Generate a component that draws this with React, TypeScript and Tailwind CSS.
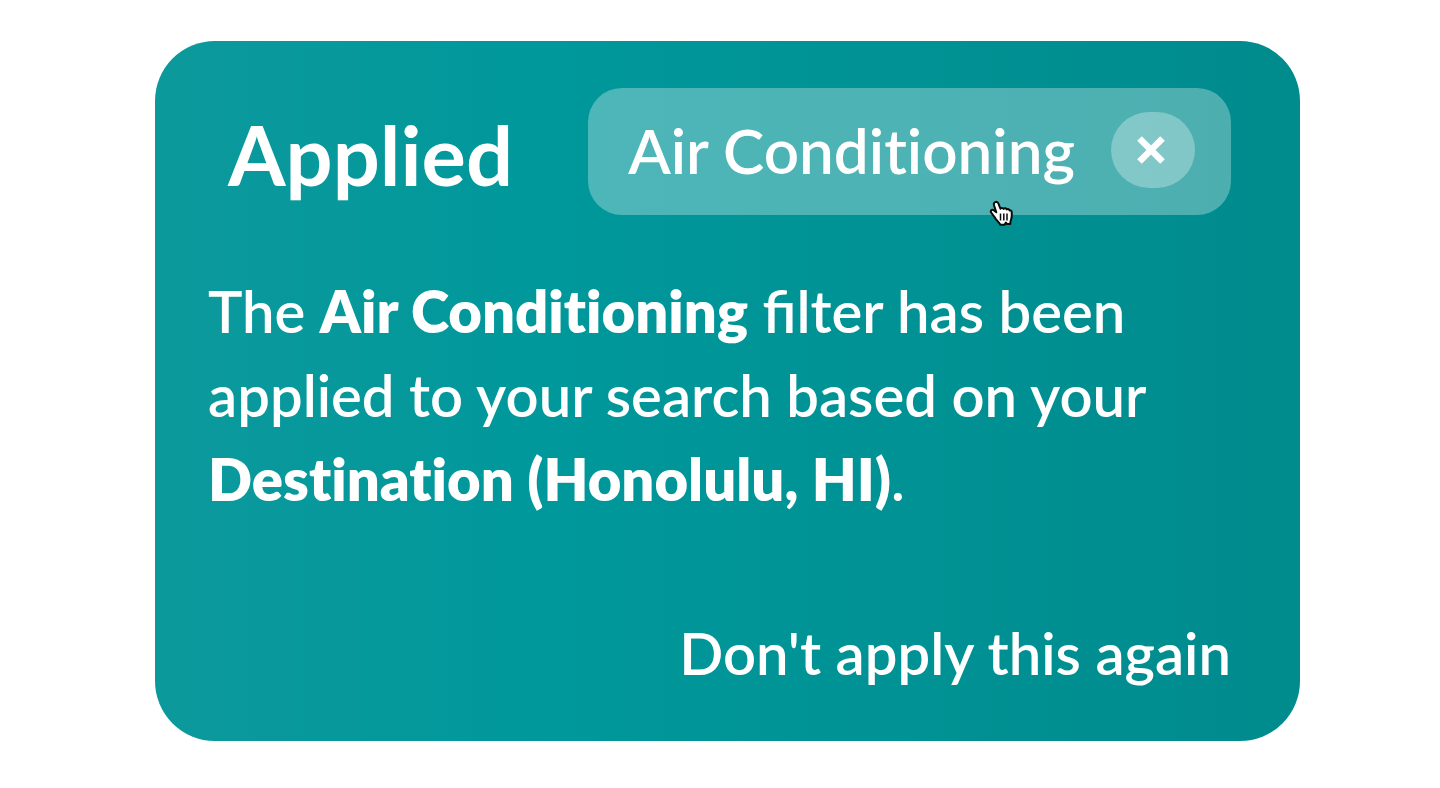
import React, { useState } from "react";

function CloseIcon() {
  return (
    <svg viewBox="0 0 28 28" className="size-7" fill="none" stroke="currentColor" strokeWidth="6.500" aria-hidden="true">
      <path d="M2.500 2.500 25.500 25.500M25.500 2.500 2.500 25.500" />
    </svg>
  );
}

function HandPointer() {
  return (
    <svg viewBox="0 0 24 27" className="h-[27px] w-6" aria-hidden="true">
      <path
        d="M6.2 2.2c1.5-.8 2.700 0 3.200 1.300l2 5.200c.5-1 2.600-1.200 3.200.2.800-1 2.600-.8 3.100.5 1-.7 2.600-.2 3 1.200.8-.4 2 .2 2 1.400.2 2.800.2 5.300-.6 7.500-.5 1.300-.8 2.600-.8 4.600h-3.200l-1.200-1.600-1.300 2.300h-4.200c-1-2.300-3-3.600-4.400-5.600C5.400 16.400 3.200 14.200 2 12.300c-.7-1.600.8-3 2.300-2.300l3 2.300L5 5.200c-.4-1.200 0-2.400 1.200-3Z"
        fill="#fff"
        stroke="#0a0a0a"
        strokeWidth="2"
        strokeLinejoin="round"
      />
      <path d="M11.500 13.500v7M14.800 13.500v7M18 13.500v7" stroke="#0a0a0a" strokeWidth="1.500" />
    </svg>
  );
}

export default function App() {
  const [applied, setApplied] = useState(true);

  return (
    <main className="flex min-h-screen items-start justify-center bg-white pt-[41px] pb-12 pl-[15px] font-['Lato',sans-serif] text-white">
      <section className="flex w-full max-w-[1145px] flex-col rounded-[60px] bg-linear-to-r from-[#0c999c] via-[#00989b] via-35% to-[#008b8d] pt-[47px] pr-[69px] pb-[46px] pl-[53px]">
        <header className="flex items-center justify-between pl-5">
          <h1 className="pt-1 text-[83px] leading-[100px] font-bold">Applied</h1>
          {applied && (
            <div className="relative flex h-[127px] items-center gap-9 rounded-[34px] bg-white/30 pr-9 pb-1 pl-10">
              <span className="text-[62px] leading-[76px] font-semibold whitespace-nowrap [font-variant-ligatures:none]">
                Air Conditioning
              </span>
              <button
                type="button"
                aria-label="Remove Air Conditioning"
                onClick={() => setApplied(false)}
                className="flex h-[76px] w-[84px] cursor-pointer items-center justify-center rounded-[38px] bg-white/30 pr-1"
              >
                <CloseIcon />
              </button>
              <span className="pointer-events-none absolute right-[218px] -bottom-3">
                <HandPointer />
              </span>
            </div>
          )}
        </header>
        <p className="mt-[54px] text-[58px] leading-[84px] font-semibold">
          The <strong className="font-extrabold [font-variant-ligatures:none]">Air Conditioning</strong> filter has been
          applied to your search based on your{" "}
          <strong className="font-extrabold [font-variant-ligatures:none]">Destination (Honolulu, HI)</strong>.
        </p>
        <button type="button" className="mt-[90px] cursor-pointer self-end text-[58px] leading-[84px] font-semibold">
          Don't apply this again
        </button>
      </section>
    </main>
  );
}
